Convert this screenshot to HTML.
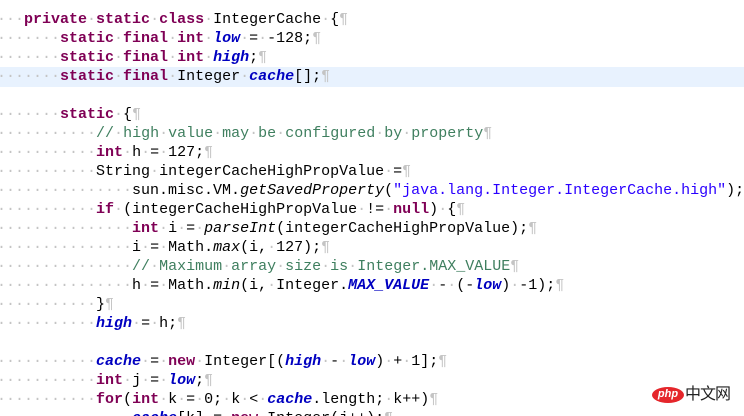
<!DOCTYPE html>
<html><head><meta charset="utf-8"><style>
html,body{margin:0;padding:0;background:#fff;width:744px;height:416px;overflow:hidden;position:relative}
pre{position:absolute;left:-12px;top:10px;margin:0;font-family:"Liberation Mono",monospace;font-size:15px;line-height:19px;color:#000;white-space:pre}
.d{color:#c4c4c4}
.k{color:#7f0055;font-weight:bold}
.f{color:#0000c0;font-weight:bold;font-style:italic}
.s{color:#2a00ff}
.c{color:#3f7f5f}
.m{font-style:italic}
.hl{position:absolute;left:0;top:67px;width:744px;height:20px;background:#e8f2fe}
.logo{position:absolute;left:652px;top:386px;font-family:"Liberation Sans","Noto Sans CJK SC",sans-serif}
.php{position:absolute;left:0;top:1px;width:32px;height:16px;border-radius:50%;background:#e5262b;color:#fff;font-size:11px;font-weight:bold;text-align:center;line-height:15px;font-style:italic}
.cn{position:absolute;left:33px;top:0;font-size:16px;color:#222;line-height:18px;white-space:nowrap;letter-spacing:-1px}
</style></head><body>
<div class="hl"></div>
<pre><span class="d">····</span><span class="k">private</span><span class="d">·</span><span class="k">static</span><span class="d">·</span><span class="k">class</span><span class="d">·</span>IntegerCache<span class="d">·</span>{<span class="d">¶</span>
<span class="d">········</span><span class="k">static</span><span class="d">·</span><span class="k">final</span><span class="d">·</span><span class="k">int</span><span class="d">·</span><span class="f">low</span><span class="d">·</span>=<span class="d">·</span>-128;<span class="d">¶</span>
<span class="d">········</span><span class="k">static</span><span class="d">·</span><span class="k">final</span><span class="d">·</span><span class="k">int</span><span class="d">·</span><span class="f">high</span>;<span class="d">¶</span>
<span class="d">········</span><span class="k">static</span><span class="d">·</span><span class="k">final</span><span class="d">·</span>Integer<span class="d">·</span><span class="f">cache</span>[];<span class="d">¶</span>

<span class="d">········</span><span class="k">static</span><span class="d">·</span>{<span class="d">¶</span>
<span class="d">············</span><span class="c">//<span class="d">·</span>high<span class="d">·</span>value<span class="d">·</span>may<span class="d">·</span>be<span class="d">·</span>configured<span class="d">·</span>by<span class="d">·</span>property</span><span class="d">¶</span>
<span class="d">············</span><span class="k">int</span><span class="d">·</span>h<span class="d">·</span>=<span class="d">·</span>127;<span class="d">¶</span>
<span class="d">············</span>String<span class="d">·</span>integerCacheHighPropValue<span class="d">·</span>=<span class="d">¶</span>
<span class="d">················</span>sun.misc.VM.<span class="m">getSavedProperty</span>(<span class="s">"java.lang.Integer.IntegerCache.high"</span>);
<span class="d">············</span><span class="k">if</span><span class="d">·</span>(integerCacheHighPropValue<span class="d">·</span>!=<span class="d">·</span><span class="k">null</span>)<span class="d">·</span>{<span class="d">¶</span>
<span class="d">················</span><span class="k">int</span><span class="d">·</span>i<span class="d">·</span>=<span class="d">·</span><span class="m">parseInt</span>(integerCacheHighPropValue);<span class="d">¶</span>
<span class="d">················</span>i<span class="d">·</span>=<span class="d">·</span>Math.<span class="m">max</span>(i,<span class="d">·</span>127);<span class="d">¶</span>
<span class="d">················</span><span class="c">//<span class="d">·</span>Maximum<span class="d">·</span>array<span class="d">·</span>size<span class="d">·</span>is<span class="d">·</span>Integer.MAX_VALUE</span><span class="d">¶</span>
<span class="d">················</span>h<span class="d">·</span>=<span class="d">·</span>Math.<span class="m">min</span>(i,<span class="d">·</span>Integer.<span class="f">MAX_VALUE</span><span class="d">·</span>-<span class="d">·</span>(-<span class="f">low</span>)<span class="d">·</span>-1);<span class="d">¶</span>
<span class="d">············</span>}<span class="d">¶</span>
<span class="d">············</span><span class="f">high</span><span class="d">·</span>=<span class="d">·</span>h;<span class="d">¶</span>

<span class="d">············</span><span class="f">cache</span><span class="d">·</span>=<span class="d">·</span><span class="k">new</span><span class="d">·</span>Integer[(<span class="f">high</span><span class="d">·</span>-<span class="d">·</span><span class="f">low</span>)<span class="d">·</span>+<span class="d">·</span>1];<span class="d">¶</span>
<span class="d">············</span><span class="k">int</span><span class="d">·</span>j<span class="d">·</span>=<span class="d">·</span><span class="f">low</span>;<span class="d">¶</span>
<span class="d">············</span><span class="k">for</span>(<span class="k">int</span><span class="d">·</span>k<span class="d">·</span>=<span class="d">·</span>0;<span class="d">·</span>k<span class="d">·</span>&lt;<span class="d">·</span><span class="f">cache</span>.length;<span class="d">·</span>k++)<span class="d">¶</span>
<span class="d">················</span><span class="f">cache</span>[k]<span class="d">·</span>=<span class="d">·</span><span class="k">new</span><span class="d">·</span>Integer(j++);<span class="d">¶</span></pre>
<div class="logo"><div class="php">php</div><div class="cn">中文网</div></div>
</body></html>
